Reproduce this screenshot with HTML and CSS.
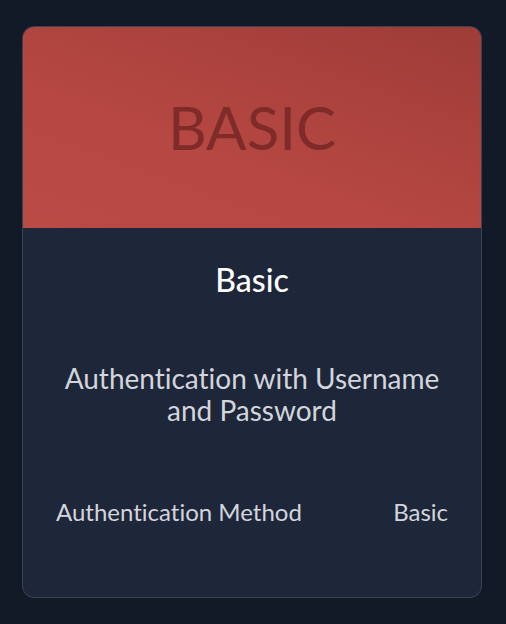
FILE: index.html
```html
<!DOCTYPE html>
<html>
<head>
<meta charset="utf-8">
<link rel="stylesheet" href="styles.css">
</head>
<body>
<div class="card">
  <div class="banner"><span class="banner-text">BASIC</span></div>
  <div class="content">
    <h2 class="title">Basic</h2>
    <p class="desc">Authentication with Username and Password</p>
    <div class="row">
      <span>Authentication Method</span>
      <span>Basic</span>
    </div>
  </div>
</div>
</body>
</html>
```
FILE: styles.css
```css
html, body {
  margin: 0;
  padding: 0;
  background: #121927;
}
body {
  padding: 26px 24px 26px 22px;
  font-family: Lato, "Open Sans", sans-serif;
  font-variant-ligatures: none;
}
.card {
  width: 458px;
  height: 570px;
  border: 1px solid #394356;
  border-radius: 12px;
  background: #1e263a;
  overflow: hidden;
  display: flex;
  flex-direction: column;
}
.banner {
  height: 201px;
  background: linear-gradient(200deg, #9e3c38 0%, #b64742 60%, #b94a44 100%);
  display: flex;
  align-items: center;
  justify-content: center;
}
.banner-text {
  font-size: 60px;
  font-weight: 400;
  color: #7f2b29;
  margin-top: -1px;
}
.content {
  padding: 32px 33px 0 33px;
  display: flex;
  flex-direction: column;
  align-items: center;
}
.title {
  margin: 0;
  font-size: 32px;
  line-height: 40px;
  font-weight: 500;
  color: #ffffff;
}
.desc {
  margin: 62px 0 0 0;
  font-size: 28px;
  line-height: 32px;
  color: #d2d5db;
  text-align: center;
  width: 392px;
}
.row {
  margin-top: 70px;
  width: 100%;
  display: flex;
  justify-content: space-between;
  font-size: 24px;
  line-height: 32px;
  color: #d2d5db;
}
```
